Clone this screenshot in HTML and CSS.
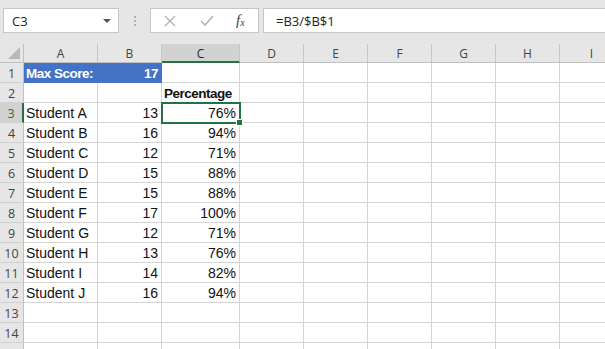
FILE: index.html
```html
<!DOCTYPE html>
<html>
<head>
<meta charset="utf-8">
<link rel="stylesheet" href="styles.css">
</head>
<body>
<div class="toolbar">
  <div class="namebox"><span>C3</span><span class="caret"></span></div>
  <div class="grip"><i></i><i></i><i></i></div>
  <div class="fxbox">
    <svg class="ico" width="14" height="14" viewBox="0 0 14 14"><path d="M2 2 L12 12 M12 2 L2 12" stroke="#b4b4b4" stroke-width="1.4" fill="none"/></svg>
    <svg class="ico" width="16" height="14" viewBox="0 0 16 14"><path d="M2 7 L6 11 L14 2" stroke="#b4b4b4" stroke-width="1.6" fill="none"/></svg>
    <span class="fx">f<sub>x</sub></span>
  </div>
  <div class="formula">=B3/$B$1</div>
</div>
<div class="sheet">
  <div class="grid">
    <div class="corner"><span class="tri"></span></div>
    <div class="ch">A</div><div class="ch">B</div><div class="ch sel">C</div><div class="ch">D</div><div class="ch">E</div><div class="ch">F</div><div class="ch">G</div><div class="ch">H</div><div class="ch">I</div>

    <div class="rh">1</div><div class="c hl b">Max Score:</div><div class="c hl b r">17</div><div class="c"></div><div class="c"></div><div class="c"></div><div class="c"></div><div class="c"></div><div class="c"></div><div class="c"></div>
    <div class="rh">2</div><div class="c"></div><div class="c"></div><div class="c b">Percentage</div><div class="c"></div><div class="c"></div><div class="c"></div><div class="c"></div><div class="c"></div><div class="c"></div>
    <div class="rh sel">3</div><div class="c">Student A</div><div class="c r">13</div><div class="c r active">76%<span class="handle"></span></div><div class="c"></div><div class="c"></div><div class="c"></div><div class="c"></div><div class="c"></div><div class="c"></div>
    <div class="rh">4</div><div class="c">Student B</div><div class="c r">16</div><div class="c r">94%</div><div class="c"></div><div class="c"></div><div class="c"></div><div class="c"></div><div class="c"></div><div class="c"></div>
    <div class="rh">5</div><div class="c">Student C</div><div class="c r">12</div><div class="c r">71%</div><div class="c"></div><div class="c"></div><div class="c"></div><div class="c"></div><div class="c"></div><div class="c"></div>
    <div class="rh">6</div><div class="c">Student D</div><div class="c r">15</div><div class="c r">88%</div><div class="c"></div><div class="c"></div><div class="c"></div><div class="c"></div><div class="c"></div><div class="c"></div>
    <div class="rh">7</div><div class="c">Student E</div><div class="c r">15</div><div class="c r">88%</div><div class="c"></div><div class="c"></div><div class="c"></div><div class="c"></div><div class="c"></div><div class="c"></div>
    <div class="rh">8</div><div class="c">Student F</div><div class="c r">17</div><div class="c r">100%</div><div class="c"></div><div class="c"></div><div class="c"></div><div class="c"></div><div class="c"></div><div class="c"></div>
    <div class="rh">9</div><div class="c">Student G</div><div class="c r">12</div><div class="c r">71%</div><div class="c"></div><div class="c"></div><div class="c"></div><div class="c"></div><div class="c"></div><div class="c"></div>
    <div class="rh">10</div><div class="c">Student H</div><div class="c r">13</div><div class="c r">76%</div><div class="c"></div><div class="c"></div><div class="c"></div><div class="c"></div><div class="c"></div><div class="c"></div>
    <div class="rh">11</div><div class="c">Student I</div><div class="c r">14</div><div class="c r">82%</div><div class="c"></div><div class="c"></div><div class="c"></div><div class="c"></div><div class="c"></div><div class="c"></div>
    <div class="rh">12</div><div class="c">Student J</div><div class="c r">16</div><div class="c r">94%</div><div class="c"></div><div class="c"></div><div class="c"></div><div class="c"></div><div class="c"></div><div class="c"></div>
    <div class="rh">13</div><div class="c"></div><div class="c"></div><div class="c"></div><div class="c"></div><div class="c"></div><div class="c"></div><div class="c"></div><div class="c"></div><div class="c"></div>
    <div class="rh">14</div><div class="c"></div><div class="c"></div><div class="c"></div><div class="c"></div><div class="c"></div><div class="c"></div><div class="c"></div><div class="c"></div><div class="c"></div>
    <div class="rh"></div><div class="c"></div><div class="c"></div><div class="c"></div><div class="c"></div><div class="c"></div><div class="c"></div><div class="c"></div><div class="c"></div><div class="c"></div>
  </div>
</div>
</body>
</html>
```
FILE: styles.css
```css
html, body {
  margin: 0;
  padding: 0;
  background: #ffffff;
  overflow: hidden;
  width: 605px;
  height: 349px;
}
.toolbar {
  height: 44px;
  background: #e6e6e6;
  display: flex;
  align-items: flex-start;
  padding-top: 8px;
  box-sizing: border-box;
  font-family: "Open Sans", "Liberation Sans", sans-serif;
}
.namebox {
  margin-left: 3px;
  width: 116px;
  height: 25px;
  box-sizing: border-box;
  background: #fff;
  border: 1px solid #c6c6c6;
  display: flex;
  align-items: center;
  justify-content: space-between;
  padding: 0 7px 0 8px;
  font-size: 13px;
  color: #222;
}
.caret {
  width: 0;
  height: 0;
  border-left: 4px solid transparent;
  border-right: 4px solid transparent;
  border-top: 4px solid #555;
}
.grip {
  width: 31px;
  height: 25px;
  display: flex;
  flex-direction: column;
  align-items: center;
  justify-content: center;
  gap: 2px;
}
.grip i {
  width: 2px;
  height: 2px;
  background: #b0b0b0;
  display: block;
}
.fxbox {
  width: 109px;
  height: 25px;
  box-sizing: border-box;
  background: #fff;
  border: 1px solid #c6c6c6;
  display: flex;
  align-items: center;
  padding-left: 12px;
}
.fxbox .ico:first-child { margin-right: 22px; }
.fxbox .ico:nth-child(2) { margin-right: 21px; }
.fx {
  font-family: "Liberation Serif", serif;
  font-style: italic;
  font-size: 15px;
  color: #444;
  line-height: 1;
}
.fx sub {
  font-size: 10px;
  vertical-align: -1px;
}
.formula {
  margin-left: 4px;
  flex: 1;
  height: 25px;
  box-sizing: border-box;
  background: #fff;
  border: 1px solid #c6c6c6;
  border-right: none;
  display: flex;
  align-items: center;
  padding-left: 12px;
  font-size: 13px;
  color: #222;
}
.sheet {
  width: 605px;
  overflow: hidden;
}
.grid {
  display: grid;
  grid-template-columns: 24px 74px 64px 78px 64px 64px 64px 64px 64px 64px;
  grid-template-rows: 19px repeat(15, 20px);
  width: 624px;
}
.corner, .ch, .rh {
  background: #e6e6e6;
  font-family: "Open Sans", "Liberation Sans", sans-serif;
  font-size: 12px;
  color: #444;
  box-sizing: border-box;
  display: flex;
  align-items: center;
  justify-content: center;
}
.corner {
  position: relative;
  border-right: 1px solid #c0c0c0;
  border-bottom: 1px solid #c0c0c0;
}
.tri {
  position: absolute;
  right: 3px;
  bottom: 3px;
  width: 0;
  height: 0;
  border-left: 12px solid transparent;
  border-bottom: 12px solid #b8b8b8;
}
.ch {
  border-right: 1px solid #c6c6c6;
  border-bottom: 1px solid #c0c0c0;
  padding-top: 1px;
}
.ch.sel {
  background: #d2d2d2;
  color: #262626;
  border-bottom: 2px solid #217346;
}
.rh {
  border-right: 1px solid #c0c0c0;
  border-bottom: 1px solid #d0d0d0;
  font-size: 12.5px;
  padding-top: 1px;
}
.rh.sel {
  background: #d2d2d2;
  color: #217346;
  border-right: 2px solid #217346;
}
.c {
  box-sizing: border-box;
  border-right: 1px solid #d4d4d4;
  border-bottom: 1px solid #d4d4d4;
  font-family: "Liberation Sans", "Open Sans", sans-serif;
  font-size: 14px;
  color: #111;
  padding: 2px 3px 0 2px;
  white-space: nowrap;
  overflow: visible;
  line-height: 17px;
  position: relative;
}
.c.r { text-align: right; }
.c.b {
  font-weight: bold;
  font-size: 13.5px;
  letter-spacing: -0.5px;
}
.c.hl {
  background: #4472c4;
  color: #fff;
  border-color: #4472c4;
}
.c.active {
  outline: 2px solid #217346;
  outline-offset: -1px;
  z-index: 2;
}
.handle {
  position: absolute;
  right: -4px;
  bottom: -4px;
  width: 5px;
  height: 5px;
  background: #217346;
  border: 1px solid #fff;
}
```
